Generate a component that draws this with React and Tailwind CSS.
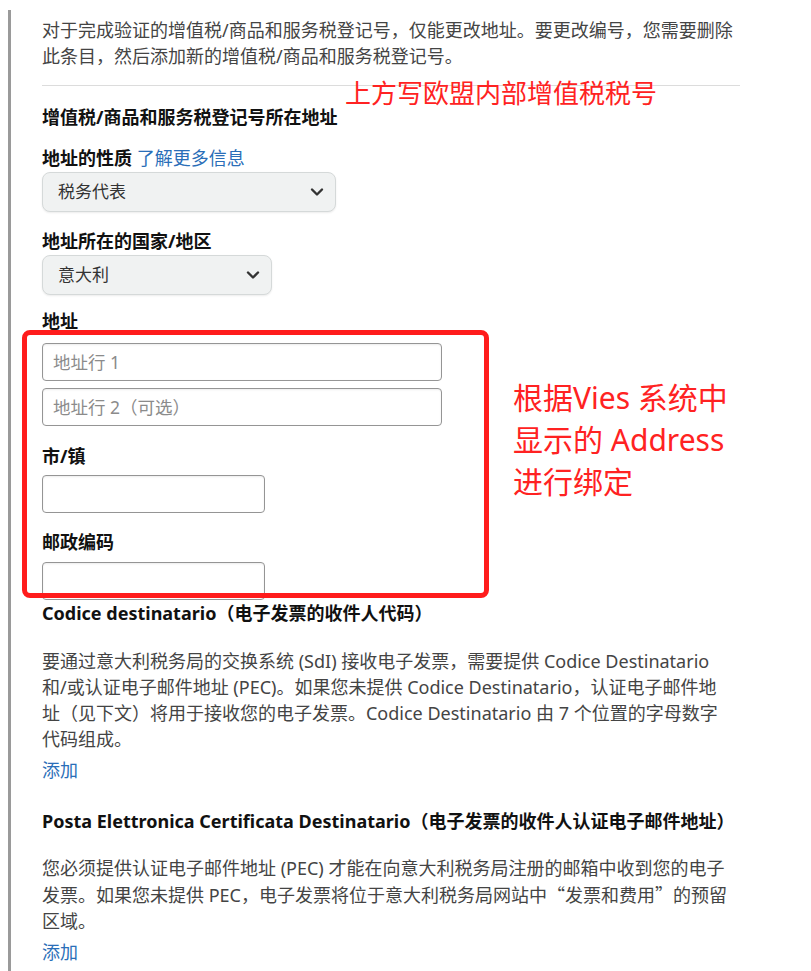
import React from "react";

const FONT = { fontFamily: '"Noto Sans", "Noto Sans CJK SC", sans-serif' };
const CJK = { fontFamily: '"Noto Sans CJK SC", sans-serif' };

function Chevron() {
  return (
    <svg width="14" height="10" viewBox="0 0 14 10" className="shrink-0">
      <path d="M2 2.5 L7 7.5 L12 2.5" fill="none" stroke="#333" strokeWidth="2.4" strokeLinecap="round" strokeLinejoin="round" />
    </svg>
  );
}

function Select({ value, width }) {
  return (
    <div
      className="flex h-[40px] items-center justify-between rounded-[8px] border border-[#d5d9d9] bg-[#f0f2f2] pl-[15px] pr-[11px] text-[17px] text-[#333] shadow-[0_1px_2px_rgba(15,17,17,0.08)]"
      style={{ width }}
    >
      <span>{value}</span>
      <Chevron />
    </div>
  );
}

function Input({ placeholder, wide }) {
  return (
    <div
      className={`flex h-[38px] items-center rounded-[4px] border border-[#959595] bg-white pl-[10px] text-[17.5px] text-[#8b8b8b] shadow-[inset_0_1px_2px_rgba(0,0,0,0.08)] ${
        wide ? "w-[400px]" : "w-[223px]"
      }`}
    >
      {placeholder}
    </div>
  );
}

export default function App() {
  return (
    <div className="relative h-[971px] w-[811px] overflow-hidden bg-white" style={FONT}>
      <div className="ml-[8px] mt-[10px] border-l-[3px] border-[#9a9a9a] pl-[31px] pt-[7px] pb-[40px] text-[18px] leading-[26px]">
        <div className="text-[#444]">
          <div>对于完成验证的增值税/商品和服务税登记号，仅能更改地址。要更改编号，您需要删除</div>
          <div>此条目，然后添加新的增值税/商品和服务税登记号。</div>
        </div>

        <div className="mt-[16px] h-px w-[698px] bg-[#dcdcdc]" />

        <div className="mt-[18px] font-bold text-[#111]">增值税/商品和服务税登记号所在地址</div>

        <div className="mt-[15px] text-[#111]">
          <span className="font-bold">地址的性质</span>{" "}
          <span className="text-[#2a6eb8]">了解更多信息</span>
        </div>
        <div className="mt-[1px]">
          <Select value="税务代表" width={294} />
        </div>

        <div className="mt-[16px] font-bold text-[#111]">地址所在的国家/地区</div>
        <div className="mt-[1px]">
          <Select value="意大利" width={230} />
        </div>

        <div className="mt-[13px] font-bold text-[#111]">地址</div>
        <div className="mt-[9px]">
          <Input placeholder="地址行 1" wide />
        </div>
        <div className="mt-[7px]">
          <Input placeholder="地址行 2（可选）" wide />
        </div>

        <div className="mt-[17px] font-bold text-[#111]">市/镇</div>
        <div className="mt-[6px]">
          <Input placeholder="" />
        </div>

        <div className="mt-[16px] font-bold text-[#111]">邮政编码</div>
        <div className="mt-[7px]">
          <Input placeholder="" />
        </div>

        <div className="font-bold text-[#111]">Codice destinatario（电子发票的收件人代码）</div>

        <div className="mt-[22px] text-[#444]">
          <div>要通过意大利税务局的交换系统 (SdI) 接收电子发票，需要提供 Codice Destinatario</div>
          <div>和/或认证电子邮件地址 (PEC)。如果您未提供 Codice Destinatario，认证电子邮件地</div>
          <div>址（见下文）将用于接收您的电子发票。Codice Destinatario 由 7 个位置的字母数字</div>
          <div>代码组成。</div>
        </div>
        <div className="mt-[5px] text-[#2a6eb8]">添加</div>

        <div className="mt-[25px] font-bold text-[#111]">
          Posta Elettronica Certificata Destinatario（电子发票的收件人认证电子邮件地址）
        </div>

        <div className="mt-[21px] text-[#444]">
          <div>您必须提供认证电子邮件地址 (PEC) 才能在向意大利税务局注册的邮箱中收到您的电子</div>
          <div>
            发票。如果您未提供 PEC，电子发票将位于意大利税务局网站中
            <span style={CJK}>“发票和费用”</span>的预留
          </div>
          <div>区域。</div>
        </div>
        <div className="mt-[5px] text-[#2a6eb8]">添加</div>
      </div>

      {/* annotations drawn over the screenshot */}
      <div className="absolute left-[345px] top-[77px] text-[26px] leading-[32px] text-[#ff2222]">
        上方写欧盟内部增值税税号
      </div>
      <div className="absolute left-[22px] top-[330px] h-[268px] w-[467px] rounded-[8px] border-[5px] border-[#ff1c1c]" />
      <div className="absolute left-[513px] top-[377px] text-[30px] leading-[42px] text-[#ff2222]">
        <div>根据Vies 系统中</div>
        <div>显示的 Address</div>
        <div>进行绑定</div>
      </div>
    </div>
  );
}
